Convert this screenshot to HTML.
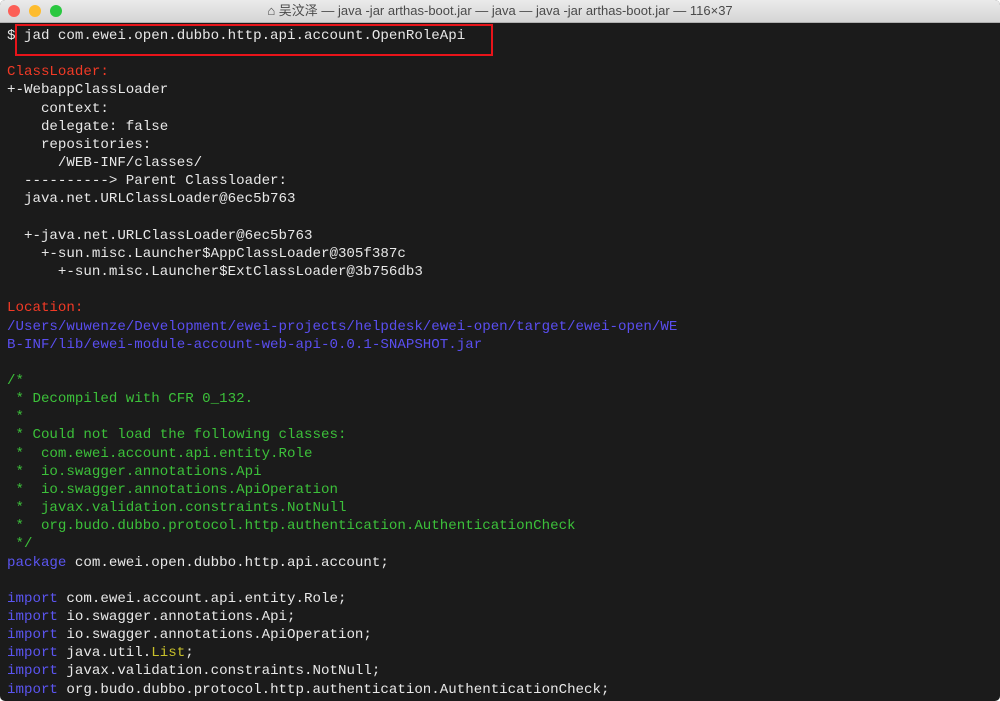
<!DOCTYPE html>
<html><head><meta charset="utf-8"><style>
html,body{margin:0;padding:0;width:1000px;height:701px;overflow:hidden;background:#fff}
.win{position:absolute;left:0;top:0;width:1000px;height:701px;background:#1b1b1b;border-radius:5px;overflow:hidden}
.tb{height:22px;background:linear-gradient(#ebebeb,#d5d5d5);border-bottom:1px solid #b0b0b0;position:relative;font-family:"Liberation Sans","Noto Sans CJK SC",sans-serif;font-size:13px;color:#4a4a4a;text-align:center;line-height:22px}
.dot{position:absolute;top:5px;width:12px;height:12px;border-radius:50%}
pre{margin:0;position:absolute;left:7px;top:27px;font-family:"Liberation Mono",monospace;font-size:14.15px;line-height:18.15px;color:#e8e8e8}
.r{color:#f23a26}.b{color:#5a4ef0}.g{color:#3cc03a}.k{color:#5b55f0}.y{color:#c8c02a}
.box{position:absolute;left:15px;top:24px;width:474px;height:28px;border:2px solid #e8141a}
</style></head><body><div class="win">
<div class="tb"><span class="dot" style="left:8px;background:#fc5f57"></span><span class="dot" style="left:29px;background:#fdbc2e"></span><span class="dot" style="left:50px;background:#2ac840"></span>⌂ 吴汶泽 — java -jar arthas-boot.jar — java — java -jar arthas-boot.jar — 116×37</div>
<div class="box"></div>
<pre>$ jad com.ewei.open.dubbo.http.api.account.OpenRoleApi

<span class="r">ClassLoader:</span>
+-WebappClassLoader
    context:
    delegate: false
    repositories:
      /WEB-INF/classes/
  ----------&gt; Parent Classloader:
  java.net.URLClassLoader@6ec5b763

  +-java.net.URLClassLoader@6ec5b763
    +-sun.misc.Launcher$AppClassLoader@305f387c
      +-sun.misc.Launcher$ExtClassLoader@3b756db3

<span class="r">Location:</span>
<span class="b">/Users/wuwenze/Development/ewei-projects/helpdesk/ewei-open/target/ewei-open/WE
B-INF/lib/ewei-module-account-web-api-0.0.1-SNAPSHOT.jar</span>

<span class="g">/*
 * Decompiled with CFR 0_132.
 *
 * Could not load the following classes:
 *  com.ewei.account.api.entity.Role
 *  io.swagger.annotations.Api
 *  io.swagger.annotations.ApiOperation
 *  javax.validation.constraints.NotNull
 *  org.budo.dubbo.protocol.http.authentication.AuthenticationCheck
 */</span>
<span class="k">package</span> com.ewei.open.dubbo.http.api.account;

<span class="k">import</span> com.ewei.account.api.entity.Role;
<span class="k">import</span> io.swagger.annotations.Api;
<span class="k">import</span> io.swagger.annotations.ApiOperation;
<span class="k">import</span> java.util.<span class="y">List</span>;
<span class="k">import</span> javax.validation.constraints.NotNull;
<span class="k">import</span> org.budo.dubbo.protocol.http.authentication.AuthenticationCheck;</pre>
</div></body></html>
